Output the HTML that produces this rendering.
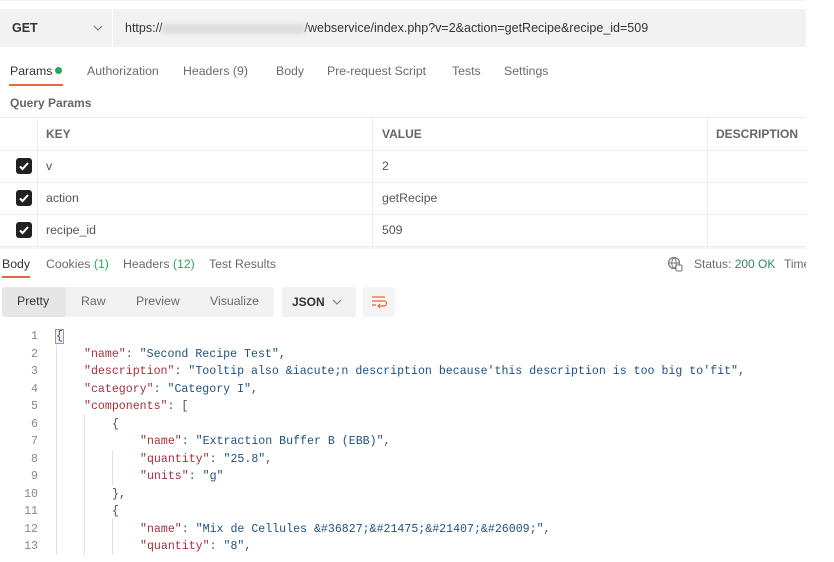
<!DOCTYPE html>
<html><head><style>
*{margin:0;padding:0;box-sizing:border-box}
body{width:834px;height:562px;overflow:hidden;background:#fff;font-family:"Liberation Sans",sans-serif;color:#212121;position:relative}
.a{position:absolute;white-space:nowrap}
.t{font-size:12.3px;color:#6b6b6b}
.code{font-family:"Liberation Mono",monospace;font-size:11.6px;color:#505050}
.k{color:#a3303b}.s{color:#1f5080}
.ln{position:absolute;left:0;width:38px;text-align:right;font-family:"Liberation Mono",monospace;font-size:11.6px;color:#888}
.cb{position:absolute;left:16px;width:16px;height:16px;background:#212121;border-radius:3px}
.cb svg{position:absolute;left:2px;top:2px}
.hl{position:absolute;height:1px;background:#ededed}
.vl{position:absolute;width:1px;background:#ededed}
.g{position:absolute;width:1px;background:#e0e0e0}
</style></head><body>
<div class="hl" style="top:0;left:0;width:806px;background:#f2f2f2"></div>
<div class="a" style="left:0;top:9px;width:806px;height:38px;background:#f2f2f2"></div>
<div class="a" style="left:112px;top:9px;width:1px;height:38px;background:#fff"></div>
<div class="a" style="left:12px;top:21px;font-size:12.5px;font-weight:bold;color:#333">GET</div>
<svg class="a" style="left:93px;top:25px" width="10" height="6"><path d="M1 1l4 4 4-4" fill="none" stroke="#777" stroke-width="1.1"/></svg>
<div class="a" style="left:125px;top:21px;font-size:12.5px;color:#333">https://<span style="display:inline-block;width:142px;height:10px;background:#ddd;filter:blur(2px);vertical-align:middle"></span>/webservice/index.php?v=2&amp;action=getRecipe&amp;recipe_id=509</div>
<div class="a t" style="left:10px;top:64px;color:#333">Params</div>
<div class="a" style="left:55px;top:67px;width:7px;height:7px;border-radius:50%;background:#2aa85a"></div>
<div class="a" style="left:9px;top:84px;width:54px;height:2px;background:#e8693c"></div>
<div class="a t" style="left:87px;top:64px">Authorization</div>
<div class="a t" style="left:183px;top:64px">Headers (9)</div>
<div class="a t" style="left:276px;top:64px">Body</div>
<div class="a t" style="left:327px;top:64px">Pre-request Script</div>
<div class="a t" style="left:452px;top:64px">Tests</div>
<div class="a t" style="left:504px;top:64px">Settings</div>
<div class="a" style="left:10px;top:96px;font-size:12px;font-weight:bold;color:#666">Query Params</div>
<div class="hl" style="top:117px;left:0;width:806px"></div>
<div class="hl" style="top:150px;left:0;width:806px"></div>
<div class="hl" style="top:182px;left:0;width:806px"></div>
<div class="hl" style="top:214px;left:0;width:806px"></div>
<div class="hl" style="top:246px;left:0;width:806px"></div>
<div class="vl" style="left:37px;top:117px;height:129px"></div>
<div class="vl" style="left:372px;top:117px;height:129px"></div>
<div class="vl" style="left:707px;top:117px;height:129px"></div>
<div class="a" style="left:46px;top:127px;font-size:12px;font-weight:bold;color:#666">KEY</div>
<div class="a" style="left:382px;top:127px;font-size:12px;font-weight:bold;color:#666">VALUE</div>
<div class="a" style="left:716px;top:127px;font-size:12px;font-weight:bold;color:#666">DESCRIPTION</div>
<div class="cb" style="top:158px"><svg width="12" height="12"><path d="M2 6.5l2.5 2.5 5.5-6" fill="none" stroke="#fff" stroke-width="2"/></svg></div>
<div class="cb" style="top:190px"><svg width="12" height="12"><path d="M2 6.5l2.5 2.5 5.5-6" fill="none" stroke="#fff" stroke-width="2"/></svg></div>
<div class="cb" style="top:222px"><svg width="12" height="12"><path d="M2 6.5l2.5 2.5 5.5-6" fill="none" stroke="#fff" stroke-width="2"/></svg></div>
<div class="a t" style="left:46px;top:159px;color:#555">v</div>
<div class="a t" style="left:46px;top:191px;color:#555">action</div>
<div class="a t" style="left:46px;top:223px;color:#555">recipe_id</div>
<div class="a t" style="left:382px;top:159px;color:#555">2</div>
<div class="a t" style="left:382px;top:191px;color:#555">getRecipe</div>
<div class="a t" style="left:382px;top:223px;color:#555">509</div>
<div class="hl" style="top:247px;left:0;width:806px;height:2px;background:#f4f4f4"></div>
<div class="a t" style="left:2px;top:257px;color:#333">Body</div>
<div class="a" style="left:2px;top:276px;width:28px;height:2px;background:#e8693c"></div>
<div class="a t" style="left:46px;top:257px">Cookies <span style="color:#2aa85a">(1)</span></div>
<div class="a t" style="left:123px;top:257px">Headers <span style="color:#2aa85a">(12)</span></div>
<div class="a t" style="left:209px;top:257px">Test Results</div>
<svg class="a" style="left:667px;top:256px" width="16" height="16" viewBox="0 0 16 16"><circle cx="7" cy="7" r="5.5" fill="none" stroke="#777" stroke-width="1.2"/><path d="M1.5 7h11M7 1.5c-3 3-3 8 0 11M7 1.5c3 3 3 8 0 11" fill="none" stroke="#777" stroke-width="1"/><rect x="9" y="9" width="6" height="6" rx="1" fill="#fff" stroke="#777"/></svg>
<div class="a t" style="left:694px;top:257px;font-size:12px">Status: <span style="color:#2c8a5c">200 OK</span></div>
<div class="a" style="left:784px;top:257px;width:22px;overflow:hidden;font-size:12px;color:#6b6b6b">Time</div>
<div class="a" style="left:2px;top:287px;width:272px;height:30px;background:#f2f2f2;border-radius:3px"></div>
<div class="a" style="left:2px;top:287px;width:64px;height:30px;background:#e6e6e6;border-radius:3px"></div>
<div class="a t" style="left:17px;top:294px;color:#333">Pretty</div>
<div class="a t" style="left:81px;top:294px">Raw</div>
<div class="a t" style="left:136px;top:294px">Preview</div>
<div class="a t" style="left:210px;top:294px">Visualize</div>
<div class="a" style="left:282px;top:287px;width:74px;height:30px;background:#f2f2f2;border-radius:3px"></div>
<div class="a" style="left:292px;top:295px;font-size:12px;font-weight:bold;color:#333">JSON</div>
<svg class="a" style="left:332px;top:299px" width="10" height="6"><path d="M1 1l4 4 4-4" fill="none" stroke="#777" stroke-width="1.1"/></svg>
<div class="a" style="left:363px;top:287px;width:32px;height:30px;background:#f4f4f4;border-radius:3px"></div>
<svg class="a" style="left:371px;top:295px" width="16" height="14"><path d="M1 2h13M1 6h12a2.5 2.5 0 010 5H8M1 10h4M9 9l-2 2 2 2" fill="none" stroke="#e8693c" stroke-width="1.2"/></svg>
<div class="g" style="left:56px;top:345px;height:210px"></div>
<div class="g" style="left:84px;top:414px;height:141px"></div>
<div class="g" style="left:112px;top:450px;height:35px"></div>
<div class="g" style="left:112px;top:519px;height:36px"></div>
<div class="a" style="left:55px;top:329px;width:9px;height:15px;border:1px solid #999;background:#eef"></div>
<div class="ln" style="top:330px">1</div>
<div class="ln" style="top:347.5px">2</div>
<div class="ln" style="top:365px">3</div>
<div class="ln" style="top:382.5px">4</div>
<div class="ln" style="top:400px">5</div>
<div class="ln" style="top:417.5px">6</div>
<div class="ln" style="top:435px">7</div>
<div class="ln" style="top:452.5px">8</div>
<div class="ln" style="top:470px">9</div>
<div class="ln" style="top:487.5px">10</div>
<div class="ln" style="top:505px">11</div>
<div class="ln" style="top:522.5px">12</div>
<div class="ln" style="top:540px">13</div>
<div class="a code" style="left:56px;top:330px">{</div>
<div class="a code" style="left:84px;top:347.5px"><span class="k">"name"</span>: <span class="s">"Second Recipe Test"</span>,</div>
<div class="a code" style="left:84px;top:365px"><span class="k">"description"</span>: <span class="s">"Tooltip also &amp;iacute;n description because'this description is too big to'fit"</span>,</div>
<div class="a code" style="left:84px;top:382.5px"><span class="k">"category"</span>: <span class="s">"Category I"</span>,</div>
<div class="a code" style="left:84px;top:400px"><span class="k">"components"</span>: [</div>
<div class="a code" style="left:112px;top:417.5px">{</div>
<div class="a code" style="left:140px;top:435px"><span class="k">"name"</span>: <span class="s">"Extraction Buffer B (EBB)"</span>,</div>
<div class="a code" style="left:140px;top:452.5px"><span class="k">"quantity"</span>: <span class="s">"25.8"</span>,</div>
<div class="a code" style="left:140px;top:470px"><span class="k">"units"</span>: <span class="s">"g"</span></div>
<div class="a code" style="left:112px;top:487.5px">},</div>
<div class="a code" style="left:112px;top:505px">{</div>
<div class="a code" style="left:140px;top:522.5px"><span class="k">"name"</span>: <span class="s">"Mix de Cellules &amp;#36827;&amp;#21475;&amp;#21407;&amp;#26009;"</span>,</div>
<div class="a code" style="left:140px;top:540px"><span class="k">"quantity"</span>: <span class="s">"8"</span>,</div>
</body></html>
